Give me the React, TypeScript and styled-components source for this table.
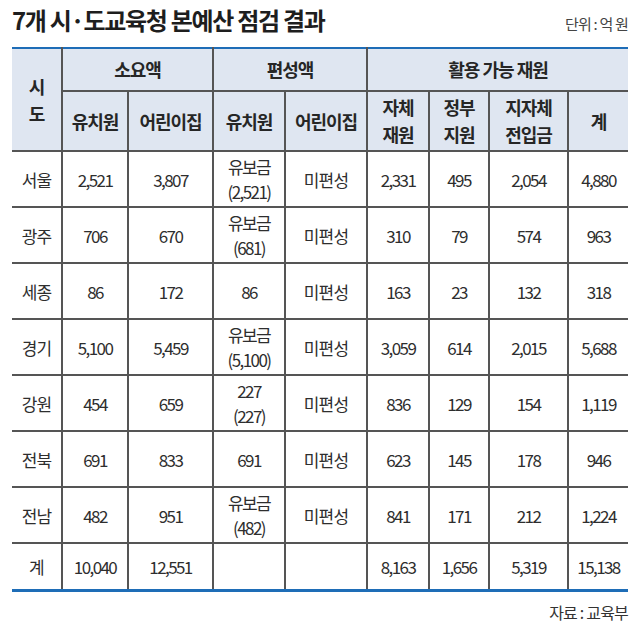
import React from "react";
import styled, { createGlobalStyle } from "styled-components";

const Global = createGlobalStyle`
  html, body { margin: 0; padding: 0; background: #ffffff; }
  body { font-family: "Noto Sans CJK KR", "Noto Sans", sans-serif; color: #2b2b2b; }
`;

const Page = styled.div`
  width: 640px;
  height: 636px;
  box-sizing: border-box;
  padding: 0 12px 0 12px;
  display: flex;
  flex-direction: column;
`;

const TitleBar = styled.div`
  display: flex;
  justify-content: space-between;
  align-items: flex-end;
  height: 36px;
  padding-bottom: 11px;
  box-sizing: content-box;
`;

const Title = styled.h1`
  margin: 0;
  font-size: 24px;
  font-weight: 700;
  letter-spacing: -1.3px;
  color: #1e1e1e;
  line-height: 32px;
`;

const Unit = styled.span`
  font-size: 15px;
  color: #444;
  letter-spacing: -0.8px;
  line-height: 24px;
`;

const Table = styled.table`
  width: 616px;
  border-collapse: collapse;
  table-layout: fixed;
  border-top: 2px solid #1e6db7;
  border-bottom: 3px solid #1e6db7;
`;

const Th = styled.th<{ $h?: number }>`
  background: #dfe6f1;
  font-weight: 700;
  font-size: 18px;
  letter-spacing: -1px;
  line-height: 27px;
  color: #262626;
  border: 2px solid #555;
  border-top: none;
  padding: 0;
  text-align: center;
  white-space: nowrap;
  ${(p) => (p.$h ? `height: ${p.$h}px;` : "")}
  &:first-child { border-left: none; }
  &:last-child { border-right: none; }
`;

const Td = styled.td<{ $num?: boolean }>`
  font-size: 17px;
  letter-spacing: ${(p) => (p.$num ? "-1.6px" : "-0.8px")};
  line-height: 25px;
  color: #2e2e2e;
  border: 2px solid #555;
  padding: 0;
  text-align: center;
  white-space: nowrap;
  &:first-child { border-left: none; }
  &:last-child { border-right: none; }
`;

const Row = styled.tr<{ $h: number }>`
  height: ${(p) => p.$h}px;
  &:last-child td { border-bottom: none; }
`;

const Source = styled.div`
  text-align: right;
  font-size: 16px;
  letter-spacing: -0.8px;
  color: #333;
  margin-top: 8px;
`;

type R = [string, string, string, string[], string, string, string, string, string];

const rows: R[] = [
  ["서울", "2,521", "3,807", ["유보금", "(2,521)"], "미편성", "2,331", "495", "2,054", "4,880"],
  ["광주", "706", "670", ["유보금", "(681)"], "미편성", "310", "79", "574", "963"],
  ["세종", "86", "172", ["86"], "미편성", "163", "23", "132", "318"],
  ["경기", "5,100", "5,459", ["유보금", "(5,100)"], "미편성", "3,059", "614", "2,015", "5,688"],
  ["강원", "454", "659", ["227", "(227)"], "미편성", "836", "129", "154", "1,119"],
  ["전북", "691", "833", ["691"], "미편성", "623", "145", "178", "946"],
  ["전남", "482", "951", ["유보금", "(482)"], "미편성", "841", "171", "212", "1,224"],
  ["계", "10,040", "12,551", [""], "", "8,163", "1,656", "5,319", "15,138"],
];

const widths = [50, 66, 85, 72, 82, 62, 60, 79, 60];

export default function App() {
  return (
    <>
      <Global />
      <Page>
        <TitleBar>
          <Title>7개 시·도교육청 본예산 점검 결과</Title>
          <Unit>단위 : 억 원</Unit>
        </TitleBar>
        <Table>
          <colgroup>
            {widths.map((w, i) => (
              <col key={i} style={{ width: w }} />
            ))}
          </colgroup>
          <thead>
            <tr>
              <Th rowSpan={2}>
                시<br />도
              </Th>
              <Th colSpan={2} $h={41}>소요액</Th>
              <Th colSpan={2}>편성액</Th>
              <Th colSpan={4}>활용 가능 재원</Th>
            </tr>
            <tr>
              <Th $h={58}>유치원</Th>
              <Th>어린이집</Th>
              <Th>유치원</Th>
              <Th>어린이집</Th>
              <Th>
                자체<br />재원
              </Th>
              <Th>
                정부<br />지원
              </Th>
              <Th>
                지자체<br />전입금
              </Th>
              <Th>계</Th>
            </tr>
          </thead>
          <tbody>
            {rows.map((r, i) => (
              <Row key={i} $h={i === rows.length - 1 ? 47 : 56}>
                <Td>{r[0]}</Td>
                <Td $num>{r[1]}</Td>
                <Td $num>{r[2]}</Td>
                <Td $num>
                  {r[3].map((t, j) => (
                    <React.Fragment key={j}>
                      {j > 0 && <br />}
                      {t}
                    </React.Fragment>
                  ))}
                </Td>
                <Td>{r[4]}</Td>
                <Td $num>{r[5]}</Td>
                <Td $num>{r[6]}</Td>
                <Td $num>{r[7]}</Td>
                <Td $num>{r[8]}</Td>
              </Row>
            ))}
          </tbody>
        </Table>
        <Source>자료 : 교육부</Source>
      </Page>
    </>
  );
}
